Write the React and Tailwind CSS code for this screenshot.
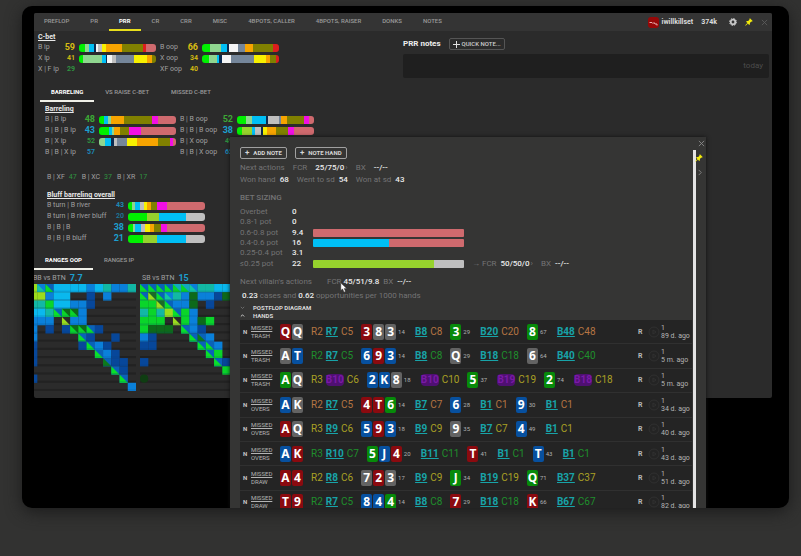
import { useState } from 'react'
import clsx from 'clsx'

const C = {
  green: '#00f000',
  light: '#8fd68f',
  cyan: '#00bff5',
  navy: '#0a2a50',
  white: '#f5f5f5',
  silver: '#bfbfbf',
  slate: '#75869a',
  yellow: '#f7f000',
  orange: '#f7a400',
  olive: '#808000',
  red: '#dc1e1e',
  rose: '#cf6a6e',
  lime: '#96d22d',
  magenta: '#f20fe4'
}

const mainTabs = ['PREFLOP', 'PR', 'PRR', 'CR', 'CRR', 'MISC', '4BPOTS, CALLER', '4BPOTS, RAISER', 'DONKS', 'NOTES']

// bars are lists of [color, weight]
const cbetLeft = [
  { label: 'B ip', value: '59', tone: 'text-[#d9bd12]', big: true, bar: [['green', 17], ['light', 14], ['cyan', 15], ['navy', 5], ['white', 5], ['silver', 12], ['yellow', 13], ['orange', 48], ['olive', 64], ['red', 8], ['rose', 30]] },
  { label: 'X ip', value: '41', tone: 'text-[#cdb512]', bar: [['green', 13], ['light', 56], ['cyan', 11], ['navy', 4], ['white', 16], ['silver', 12], ['slate', 53], ['yellow', 40], ['orange', 14], ['olive', 12]] },
  { label: 'X | F ip', value: '29', tone: 'text-[#2f9440]' }
]
const cbetRight = [
  { label: 'B oop', value: '66', tone: 'text-[#d9bd12]', big: true, bar: [['green', 24], ['light', 32], ['cyan', 20], ['navy', 5], ['white', 26], ['slate', 21], ['orange', 24], ['olive', 62], ['red', 17]] },
  { label: 'X oop', value: '34', tone: 'text-[#cdb512]', bar: [['green', 22], ['light', 22], ['cyan', 7], ['navy', 8], ['white', 28], ['slate', 71], ['yellow', 34], ['orange', 14], ['olive', 18], ['red', 8]] },
  { label: 'XF oop', value: '40', tone: 'text-[#cdb512]' }
]
const barrelLeft = [
  { label: 'B | B ip', value: '48', tone: 'text-[#3da836]', big: true, bar: [['green', 16], ['cyan', 12], ['light', 7], ['orange', 39], ['olive', 86], ['magenta', 17], ['rose', 55]] },
  { label: 'B | B | B ip', value: '43', tone: 'text-[#1c9fcf]', big: true, bar: [['green', 31], ['cyan', 9], ['light', 6], ['orange', 17], ['olive', 28], ['magenta', 35], ['rose', 106]] },
  { label: 'B | X ip', value: '52', tone: 'text-[#2f9440]', bar: [['light', 18], ['cyan', 19], ['navy', 7], ['silver', 11], ['slate', 28], ['yellow', 30], ['orange', 64], ['olive', 38], ['magenta', 8], ['rose', 9]] },
  { label: 'B | B | X ip', value: '57', tone: 'text-[#1c88b5]' }
]
const barrelRight = [
  { label: 'B | B oop', value: '52', tone: 'text-[#3da836]', big: true, bar: [['green', 28], ['light', 17], ['cyan', 43], ['navy', 6], ['silver', 34], ['slate', 6], ['orange', 17], ['olive', 50], ['magenta', 15], ['rose', 16]] },
  { label: 'B | B | B oop', value: '38', tone: 'text-[#1c9fcf]', big: true, bar: [['green', 15], ['lime', 30], ['cyan', 8], ['silver', 19], ['navy', 6], ['yellow', 12], ['orange', 26], ['olive', 38], ['magenta', 17], ['rose', 61]] },
  { label: 'B | X oop', value: '49', tone: 'text-[#2f9440]' },
  { label: 'B | B | X oop', value: '62', tone: 'text-[#1c88b5]' }
]
const bluffRows = [
  { label: 'B turn | B river', value: '43', tone: 'text-[#1c88b5]', bar: [['green', 12], ['light', 8], ['cyan', 16], ['silver', 13], ['yellow', 7], ['orange', 14], ['olive', 18], ['magenta', 28], ['rose', 116]] },
  { label: 'B turn | B river bluff', value: '20', tone: 'text-[#1c7396]', bar: [['green', 57], ['lime', 36], ['cyan', 81], ['silver', 58]] },
  { label: 'B | B | B', value: '38', tone: 'text-[#1c9fcf]', big: true, bar: [['green', 14], ['light', 8], ['cyan', 17], ['silver', 13], ['yellow', 13], ['orange', 13], ['olive', 22], ['magenta', 19], ['rose', 113]] },
  { label: 'B | B | B bluff', value: '21', tone: 'text-[#1c9fcf]', big: true, bar: [['green', 46], ['lime', 40], ['cyan', 88], ['silver', 58]] }
]

const sizing = [
  { label: 'Overbet', value: '0' },
  { label: '0.8-1 pot', value: '0' },
  { label: '0.6-0.8 pot', value: '9.4', bar: [['rose', 1]] },
  { label: '0.4-0.6 pot', value: '16', bar: [['cyan', 1], ['rose', 1]] },
  { label: '0.25-0.4 pot', value: '3.1' },
  { label: '≤0.25 pot', value: '22', bar: [['lime', 80], ['silver', 20]], next: true }
]

// card = rank + suit letter, r red / g green / b blue / s grey
const hands = [
  { kind: 'TRASH', tone: 'tan', hole: 'Qr Qs', steps: ['R2 R7 C5', '3r 8s 3s 14', 'B8 C8', '3g 29', 'B20 C20', '8g 67', 'B48 C48'], ago: '89 d. ago' },
  { kind: 'TRASH', tone: 'green', hole: 'As Tb', steps: ['R2 R7 C5', '6b 9r 3b 14', 'B8 C8', 'Qs 29', 'B18 C18', '6s 64', 'B40 C40'], ago: '5 m. ago' },
  { kind: 'TRASH', tone: 'yellow', hole: 'Ag Qs', purple: true, steps: ['R3 B10 C6', '2b Kb 8s 18', 'B10 C10', '5g 37', 'B19 C19', '2g 74', 'B18 C18'], ago: '5 m. ago' },
  { kind: 'OVERS', tone: 'tan', hole: 'Ab Ks', steps: ['R2 R7 C5', '4r Tr 6g 14', 'B7 C7', '6b 28', 'B1 C1', '9b 30', 'B1 C1'], ago: '34 d. ago' },
  { kind: 'OVERS', tone: 'yellow', hole: 'Ar Qs', steps: ['R3 R9 C6', '5b 9r 3b 18', 'B9 C9', '9s 35', 'B7 C7', '4b 49', 'B1 C1'], ago: '40 d. ago' },
  { kind: 'OVERS', tone: 'green', hole: 'Ab Kr', steps: ['R3 R10 C7', '5g Jb 4r 20', 'B11 C11', 'Tr 41', 'B1 C1', 'Tb 43', 'B1 C1'], ago: '43 d. ago' },
  { kind: 'DRAW', tone: 'yellow', hole: 'Ar 4r', steps: ['R2 R8 C6', '7s 2r 3s 17', 'B9 C9', 'Jg 34', 'B19 C19', 'Qg 71', 'B37 C37'], ago: '51 d. ago' },
  { kind: 'DRAW', tone: 'green', hole: 'Tr 9r', steps: ['R2 R7 C5', '8b 4b 4g 14', 'B8 C8', '7r 29', 'B18 C18', 'Kr 66', 'B67 C67'], ago: '82 d. ago' }
]

const suits = {
  r: 'bg-[#8b0a0f]',
  g: 'bg-[#078a0a]',
  b: 'bg-[#07509f]',
  s: 'bg-[#636363]'
}

const tones = {
  tan: 'text-[#b57543]',
  green: 'text-[#1f8f2c]',
  yellow: 'text-[#aaa124]'
}

// one letter per cell, the digits are cells split into two triangles
const rangeColors = {
  D: ['#07479a'],
  B: ['#0a80da'],
  L: ['#0ab8ee'],
  T: ['#12b8a4'],
  G: ['#0ad52a'],
  g: ['#0d6a1a'],
  Y: ['#9bdc1c'],
  1: ['#0ae02a', '#0a62b8'],
  2: ['#9bdc1c', '#1c6a28'],
  3: ['#0ad52a', '#0d6a1a'],
  4: ['#12c8a0', '#0a80da'],
  5: ['#0d7a1a', '#0a62b8'],
  6: ['#9bdc1c', '#2b2b2b'],
  7: ['#0ad52a', '#12a8c0']
}
const rangeA = [
  'Y41LLLLBLTBBT',
  'YYBLL..D.B...',
  'TTGLLBBD.....',
  'LLT133B......',
  'BBB.6BB......',
  'B.D.D331D....',
  'B.....1D..D..',
  'D.....D1BD...',
  'D.......1BD..',
  'D........5DD.',
  '..........1D.',
  'D..........1.',
  '............B'
]
const rangeB = [
  '1111774TTLLTG',
  '1214TBgBBDg..',
  'GG21BBg.D....',
  'TGTY1GB......',
  'GGG.6GBgG....',
  'Gggg.1BD.....',
  'BD....15B....',
  'DD.....11B...',
  '........1G...',
  'D........1D..',
  '..........G..',
  'o............',
  '.............'
]

function RangeChart({ rows }) {
  return (
    <svg viewBox="0 0 104 104" className="block size-[107px] shrink-0">
      {rows.map((_, y) => (
        <rect key={y} x="0" y={y * 8 + 6} width="104" height="2" fill="#222222" />
      ))}
      {rows.map((row, y) =>
        row.split('').map((cell, x) => {
          if (cell === '.') return null
          if (cell === 'o') return <circle key={x} cx={x * 8 + 4} cy={y * 8 + 4} r="4" fill="#0f3d12" />
          const [low, high] = rangeColors[cell]
          const px = x * 8
          const py = y * 8
          return (
            <g key={x}>
              <rect x={px} y={py} width="8.1" height="8.1" fill={high || low} />
              {high && <path d={`M${px} ${py}v8h8z`} fill={low} />}
              <path d={`M${px} ${py + 7}h8`} stroke="#083a70" strokeOpacity="0.25" />
            </g>
          )
        })
      )}
    </svg>
  )
}

function Bar({ parts, className }) {
  return (
    <div className={clsx('flex h-2 overflow-hidden', className)}>
      {parts.map(([color, weight], i) => (
        <div key={i} style={{ flexGrow: weight, background: C[color] }} />
      ))}
    </div>
  )
}

function StatRows({ rows, className }) {
  return (
    <div className={className}>
      {rows.map((row) => (
        <div key={row.label} className="flex h-[11px] items-center whitespace-nowrap">
          <span className="flex-1 text-[7px] text-[#a0a0a0]">{row.label}</span>
          <span className={clsx('mr-1 w-3 text-right font-bold', row.big ? 'text-[9px]' : 'text-[7px]', row.tone)}>
            {row.value}
          </span>
          <div className="w-[77px]">{row.bar && <Bar parts={row.bar} className="rounded-[3px]" />}</div>
        </div>
      ))}
    </div>
  )
}

function SubTabs({ items, active, onSelect }) {
  return (
    <div className="flex">
      {items.map((item) => (
        <button
          key={item}
          onClick={() => onSelect(item)}
          className={clsx(
            'h-[14px] border-b-2 px-[11px] pb-1 text-[6px] leading-[8px] whitespace-nowrap',
            item === active ? 'border-[#f0f0e8] font-bold text-white' : 'border-transparent font-medium text-[#9a9a9a]'
          )}
        >
          {item}
        </button>
      ))}
    </div>
  )
}

function Pin({ className }) {
  return (
    <svg viewBox="0 0 10 10" className={className} fill="#f2ea0c">
      <path d="M6.2.4 9.600 3.800 8.600 4.600 7.800 4.400 6.100 6.100 6.200 7.700 5.200 8.600 3.600 7 .9 9.600.3 9.100 3 6.300 1.400 4.800 2.300 3.800 3.900 3.900 5.600 2.200 5.400 1.200z" />
    </svg>
  )
}

function Cross({ className }) {
  return (
    <svg viewBox="0 0 8 8" className={className} stroke="currentColor" fill="none">
      <path d="M1 1l6 6M7 1L1 7" />
    </svg>
  )
}

function Card({ code }) {
  return (
    <span
      className={clsx(
        'flex h-4 w-[11px] items-center justify-center rounded-xs font-["Noto_Sans"] text-[12px] font-bold text-white',
        suits[code[1]]
      )}
    >
      {code[0]}
    </span>
  )
}

function Step({ text, tone, purple }) {
  const parts = text.split(' ')
  if (/^.[rgbs]$/.test(parts[0])) {
    return (
      <div className="flex items-center gap-px">
        {parts.map((part, i) =>
          i < parts.length - 1 ? (
            <Card key={i} code={part} />
          ) : (
            <span key={i} className="ml-px w-[9px] text-[6px] text-[#b0b0b0]">
              {part}
            </span>
          )
        )}
      </div>
    )
  }
  // second from the end is always the villain's bet
  return (
    <div className="flex items-center gap-[3px] text-[10px] leading-[12px]">
      {parts.map((part, i) => {
        const bet = i === parts.length - 2
        return (
          <span
            key={i}
            className={clsx(
              !bet && tones[tone],
              bet && !purple && 'font-bold text-[#18a3a8] underline',
              bet && purple && 'rounded-sm bg-[#4f1072] font-bold text-[#7a1aa6]'
            )}
          >
            {part}
          </span>
        )
      })}
    </div>
  )
}

function HandRow({ hand }) {
  return (
    <div className="flex items-center border-b border-[#303030] bg-[#242424] pl-[3px]">
      <span className="w-2 text-[6px] font-bold text-[#c8c8c8]">N</span>
      <span className="w-[29px] text-[6px] leading-[8px] text-[#b4b4b4]">
        <span className="underline">MISSED</span>
        <br />
        {hand.kind}
      </span>
      <div className="mr-2 flex gap-px">
        {hand.hole.split(' ').map((code, i) => (
          <Card key={i} code={code} />
        ))}
      </div>
      <div className="flex flex-1 items-center gap-2">
        {hand.steps.map((step, i) => (
          <Step key={i} text={step} tone={hand.tone} purple={hand.purple} />
        ))}
      </div>
      <span className="w-[10px] text-[7px] font-bold text-[#b8b8b8]">R</span>
      <svg viewBox="0 0 12 12" className="mr-px size-3 fill-none stroke-[#303030]">
        <circle cx="6" cy="6" r="5" />
        <path d="M5 4l3 2-3 2z" />
      </svg>
      <span className="w-[31px] text-[7px] leading-[8px] whitespace-nowrap text-[#b4b4b4]">
        1<br />
        {hand.ago}
      </span>
    </div>
  )
}

function Val({ children, className }) {
  return <span className={clsx('font-medium text-[#ececec]', className)}>{children}</span>
}

function HandsPopup() {
  return (
    <section className="absolute top-[131px] right-[83px] bottom-0 left-[208px] flex overflow-hidden bg-[#353534] shadow-[0_0_4px_#111]">
      <div className="min-w-0 flex-1 pl-[10px] text-[8px] leading-[10px] whitespace-nowrap text-[#747474]">
        <div className="mt-[10px] flex gap-2">
          {['ADD NOTE', 'NOTE HAND'].map((label) => (
            <button
              key={label}
              className="flex h-3 items-center gap-1 rounded-xs border border-[#a0a0a0] px-1 text-[6px] font-bold text-[#d6d6d6]"
            >
              <span className="text-[8px] leading-[8px]">+</span>
              {label}
            </button>
          ))}
        </div>
        <div className="mt-1 flex">
          Next actions <span className="ml-2">FCR</span>
          <Val className="ml-2">25/75/0</Val>
          <span className="ml-px">›</span>
          <span className="ml-2">BX</span>
          <Val className="ml-2">--/--</Val>
        </div>
        <div className="mt-[2px] flex">
          Won hand <Val className="ml-1">68</Val>
          <span className="ml-2">Went to sd</span>
          <Val className="ml-1">54</Val>
          <span className="ml-2">Won at sd</span>
          <Val className="ml-1">43</Val>
        </div>
        <h3 className="mt-2 font-medium">BET SIZING</h3>
        <div className="mt-1 grid h-[62px] auto-rows-fr">
          {sizing.map((row) => (
            <div key={row.label} className="flex items-center">
              <span className="w-[52px]">{row.label}</span>
              <Val className="w-[21px]">{row.value}</Val>
              {row.bar && <Bar parts={row.bar} className="w-[151px] rounded-[1px]" />}
              {row.next && (
                <div className="ml-2 flex">
                  → FCR <Val className="ml-1">50/50/0</Val>
                  <span className="ml-px">›</span>
                  <span className="ml-2">BX</span>
                  <Val className="ml-1">--/--</Val>
                </div>
              )}
            </div>
          ))}
        </div>
        <div className="mt-2 flex">
          Next villain's actions <span className="ml-[15px]">FCR</span>
          <Val className="ml-[2px]">45/51/9.8</Val>
          <span className="ml-1">BX</span>
          <Val className="ml-1">--/--</Val>
        </div>
        <p className="mt-1 ml-[2px]">
          <Val>0.23</Val> cases and <Val>0.62</Val> opportunities per 1000 hands
        </p>
        <button className="mt-[3px] flex h-2 items-center gap-2 text-[6px] font-bold text-[#d8d8d8]">
          <svg viewBox="0 0 6 4" className="w-[5px] fill-none stroke-[#777777]">
            <path d="M1 1l2 2 2-2" />
          </svg>
          POSTFLOP DIAGRAM
        </button>
        <button className="flex h-2 items-center gap-2 text-[6px] font-bold text-[#d8d8d8]">
          <svg viewBox="0 0 6 4" className="w-[5px] fill-none stroke-[#e8e8e8]">
            <path d="M1 3l2-2 2 2" />
          </svg>
          HANDS
        </button>
        <div className="grid h-[195px] auto-rows-fr">
          {hands.map((hand, i) => (
            <HandRow key={i} hand={hand} />
          ))}
        </div>
      </div>
      <div className="mt-[13px] ml-px w-[3px] bg-[#e4e4e4]" />
      <div className="mt-[3px] flex w-[10px] flex-col items-center gap-[7px]">
        <button aria-label="Close" className="text-[#8a8a8a]">
          <Cross className="size-[7px]" />
        </button>
        <button aria-label="Pin" className="-ml-1">
          <Pin className="size-2" />
        </button>
        <button aria-label="Next" className="-ml-1 text-[#8a8a8a]">
          <svg viewBox="0 0 8 8" className="size-[7px] fill-none stroke-current">
            <path d="M3 1l3 3-3 3" />
          </svg>
        </button>
      </div>
      <svg viewBox="0 0 8 12" className="absolute top-[146px] left-[110px] h-[10px]">
        <path d="M1 0v9l2-2 2 4 1.500-1-1.500-3.500h3z" fill="#fff" stroke="#333" strokeWidth="0.5" />
      </svg>
    </section>
  )
}

function App() {
  const [tab, setTab] = useState('PRR')
  const [subTab, setSubTab] = useState('BARRELING')
  const [rangeTab, setRangeTab] = useState('RANGES OOP')

  return (
    <div className="flex h-screen flex-col bg-[#323231] pt-[6px] pr-3 pb-12 pl-[22px] font-[Roboto,sans-serif] leading-none">
      <div className="relative flex-1 overflow-hidden rounded-[10px] bg-black pt-[7px] pr-[17px] pl-3 shadow-[0_4px_16px_#1c1c1c]">
        <main className="overflow-hidden rounded-xs bg-[#2b2b2b]">
          <header className="flex h-[18px] items-center bg-[#343434]">
            <nav className="flex flex-1 gap-px">
              {mainTabs.map((name) => (
                <button
                  key={name}
                  onClick={() => setTab(name)}
                  className={clsx(
                    'h-[18px] border-b-2 px-[10px] text-[6px] whitespace-nowrap',
                    tab === name ? 'border-[#e8de1c] font-bold text-white' : 'border-transparent font-medium text-[#9a9a9a]'
                  )}
                >
                  {name}
                </button>
              ))}
            </nav>
            <svg viewBox="0 0 11 11" className="mr-[3px] size-[11px]">
              <rect width="11" height="11" rx="3" fill="#960808" />
              <path d="M1.500 5.500h2.500l1 1 1-1 1 1.500h2v1.500" stroke="#e8b0b0" fill="none" />
            </svg>
            <span className="mr-2 text-[7px] font-bold text-[#dcdcdc]">iwillkillset</span>
            <span className="mr-3 text-[7px] font-bold text-[#dcdcdc]">374k</span>
            <button aria-label="Settings" className="mr-2">
              <svg viewBox="0 0 8 8" className="size-2 fill-none stroke-[#c8c8c8]">
                <circle cx="4" cy="4" r="2.300" strokeWidth="1.800" />
                <circle cx="4" cy="4" r="3.500" strokeDasharray="1.400 1.350" />
              </svg>
            </button>
            <button aria-label="Pin" className="mr-2">
              <Pin className="size-2" />
            </button>
            <button aria-label="Close" className="mr-1 text-[#5c5c5c]">
              <Cross className="size-[7px]" />
            </button>
          </header>

          <div className="flex">
            <div className="w-[369px] shrink-0">
              <div className="pt-[2px] pl-1">
                <h2 className="text-[7px] leading-[9px] font-bold text-[#e8e8e8] underline">C-bet</h2>
                <div className="flex gap-1">
                  <StatRows rows={cbetLeft} className="w-[118px]" />
                  <StatRows rows={cbetRight} className="w-[119px]" />
                </div>
              </div>
              <div className="mt-[13px] pl-[6px]">
                <SubTabs items={['BARRELING', 'VS RAISE C-BET', 'MISSED C-BET']} active={subTab} onSelect={setSubTab} />
              </div>
              <div className="mt-[3px] pl-[11px]">
                <h2 className="text-[7px] leading-[9px] font-bold text-[#e8e8e8] underline">Barreling</h2>
                <div className="flex gap-1">
                  <StatRows rows={barrelLeft} className="w-[131px]" />
                  <StatRows rows={barrelRight} className="w-[134px]" />
                </div>
                <div className="mt-[15px] flex gap-1 pl-[2px] text-[7px] leading-[9px] text-[#a0a0a0]">
                  <span>B | XF</span>
                  <span className="mr-px text-[#2f9440]">47</span>
                  <span>B | XC</span>
                  <span className="mr-px text-[#2f9440]">37</span>
                  <span>B | XR</span>
                  <span className="text-[#2f9440]">17</span>
                </div>
                <h2 className="mt-[9px] pl-[2px] text-[7px] leading-[9px] font-bold text-[#e8e8e8] underline">Bluff barreling overall</h2>
                <StatRows rows={bluffRows} className="w-[160px] pl-[2px]" />
              </div>
              <div className="mt-3">
                <SubTabs items={['RANGES OOP', 'RANGES IP']} active={rangeTab} onSelect={setRangeTab} />
              </div>
              <div className="-ml-[5px] flex gap-[4px] pt-[2px] pb-[7px]">
                <div>
                  <div className="flex h-3 items-center gap-1 pl-1 text-[7px] text-[#a0a0a0]">
                    BB vs BTN <b className="text-[9px] text-[#1c9fcf]">7.7</b>
                  </div>
                  <RangeChart rows={rangeA} />
                </div>
                <div>
                  <div className="flex h-3 items-center gap-1 pl-[2px] text-[7px] text-[#a0a0a0]">
                    SB vs BTN <b className="text-[9px] text-[#1c9fcf]">15</b>
                  </div>
                  <RangeChart rows={rangeB} />
                </div>
              </div>
            </div>
            <aside className="flex-1 pt-[7px] pr-[3px]">
              <div className="flex items-center gap-2">
                <h2 className="text-[8px] font-bold text-[#eeeeee]">PRR notes</h2>
                <button className="flex h-3 items-center gap-[2px] rounded-xs border border-[#555555] px-[3px] text-[6px] font-medium text-[#d0d0d0]">
                  <svg viewBox="0 0 7 7" className="size-[7px] stroke-[#e0e0e0]">
                    <path d="M3.500 0v7M0 3.500h7" />
                  </svg>
                  QUICK NOTE...
                </button>
              </div>
              <div className="mt-1 flex h-6 items-center justify-end rounded-xs bg-[#1f1f1f] pr-[6px] text-[8px] text-[#4c4c4c]">
                today
              </div>
            </aside>
          </div>
        </main>
        <HandsPopup />
      </div>
    </div>
  )
}

export default App
